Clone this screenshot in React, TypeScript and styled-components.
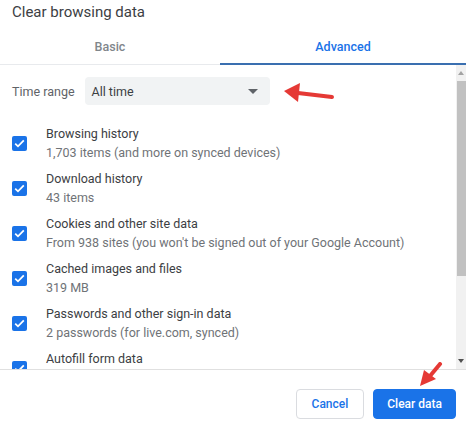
import styled, { createGlobalStyle } from "styled-components";

const GlobalStyle = createGlobalStyle`
  html, body {
    margin: 0;
    padding: 0;
    background: #fff;
  }
  body {
    font-family: Roboto, "Liberation Sans", Arial, sans-serif;
    color: #202124;
  }
`;

const Dialog = styled.div`
  position: relative;
  width: 474px;
  height: 427px;
  display: flex;
  flex-direction: column;
  overflow: hidden;
  background: #fff;
`;

const Title = styled.div`
  height: 25px;
  padding: 2px 0 0 12px;
  font-size: 15px;
  line-height: 20px;
  color: #3c4043;
`;

const Tabs = styled.div`
  display: flex;
  width: 466px;
  height: 37px;
  border-bottom: 1px solid #e8eaed;
`;

const Tab = styled.div<{ $active?: boolean }>`
  flex: ${(p) => (p.$active ? "0 0 246px" : "0 0 220px")};
  display: flex;
  align-items: center;
  justify-content: center;
  padding-top: 2px;
  font-size: 12.5px;
  font-weight: 500;
  color: ${(p) => (p.$active ? "#1a73e8" : "#80868b")};
  border-bottom: 2px solid ${(p) => (p.$active ? "#3a6fb0" : "transparent")};
  margin-bottom: -1px;
  box-sizing: border-box;
`;

const BodyRow = styled.div`
  display: flex;
  height: 304px;
  border-bottom: 1px solid #e0e0e0;
  width: 466px;
`;

const Content = styled.div`
  flex: 1;
  padding: 12px 0 0 12px;
  overflow: hidden;
`;

const RangeRow = styled.div`
  display: flex;
  align-items: center;
  gap: 10px;
  margin-bottom: 19px;
`;

const Label = styled.span`
  font-size: 12.5px;
  color: #5f6368;
  white-space: nowrap;
`;

const Select = styled.div`
  width: 185px;
  height: 28px;
  box-sizing: border-box;
  padding: 0 12px 0 7px;
  display: flex;
  align-items: center;
  justify-content: space-between;
  background: #f1f3f4;
  border-radius: 4px;
  font-size: 12.5px;
  color: #3c4043;
`;

const Caret = styled.span`
  width: 0;
  height: 0;
  border-left: 5px solid transparent;
  border-right: 5px solid transparent;
  border-top: 5px solid #5f6368;
`;

const Item = styled.div`
  display: flex;
  align-items: center;
  height: 38px;
  margin-bottom: 7px;
`;

const Check = styled.span`
  width: 15px;
  height: 15px;
  border-radius: 2px;
  background: #1a73e8;
  display: flex;
  align-items: center;
  justify-content: center;
  margin-right: 19px;
  flex-shrink: 0;
`;

const Texts = styled.div`
  display: flex;
  flex-direction: column;
`;

const ItemTitle = styled.span`
  font-size: 12.5px;
  line-height: 19px;
  color: #3c4043;
`;

const ItemSub = styled.span`
  font-size: 12.5px;
  line-height: 19px;
  min-height: 19px;
  color: #6f7377;
`;

const ScrollTrack = styled.div`
  width: 10px;
  background: #f1f1f1;
  display: flex;
  flex-direction: column;
  align-items: center;
`;

const ScrollArrow = styled.div<{ $down?: boolean }>`
  height: 16px;
  display: flex;
  align-items: center;
  justify-content: center;
  &::after {
    content: "";
    border-left: 3px solid transparent;
    border-right: 3px solid transparent;
    ${(p) =>
      p.$down
        ? "border-top: 4px solid #505050;"
        : "border-bottom: 4px solid #a3a3a3;"}
  }
`;

const Thumb = styled.div`
  width: 9px;
  height: 195px;
  background: #c1c1c1;
`;

const Spacer = styled.div`
  flex: 1;
`;

const Footer = styled.div`
  flex: 1;
  display: flex;
  justify-content: flex-end;
  align-items: flex-start;
  gap: 9px;
  padding: 19px 18px 0 0;
`;

const Button = styled.button<{ $primary?: boolean }>`
  height: 30px;
  padding: 0 ${(p) => (p.$primary ? "13px" : "15px")};
  border-radius: 4px;
  font-family: inherit;
  font-size: 12px;
  font-weight: 500;
  border: 1px solid ${(p) => (p.$primary ? "#1a73e8" : "#dadce0")};
  background: ${(p) => (p.$primary ? "#1a73e8" : "#fff")};
  color: ${(p) => (p.$primary ? "#fff" : "#1a73e8")};
`;

const Arrow = styled.svg`
  position: absolute;
  pointer-events: none;
`;

const items = [
  ["Browsing history", "1,703 items (and more on synced devices)"],
  ["Download history", "43 items"],
  ["Cookies and other site data", "From 938 sites (you won't be signed out of your Google Account)"],
  ["Cached images and files", "319 MB"],
  ["Passwords and other sign-in data", "2 passwords (for live.com, synced)"],
  ["Autofill form data", ""],
];

export default function App() {
  return (
    <>
      <GlobalStyle />
      <Dialog>
        <Title>Clear browsing data</Title>
        <Tabs>
          <Tab>Basic</Tab>
          <Tab $active>Advanced</Tab>
        </Tabs>
        <BodyRow>
          <Content>
            <RangeRow>
              <Label>Time range</Label>
              <Select>
                All time
                <Caret />
              </Select>
            </RangeRow>
            {items.map(([t, s]) => (
              <Item key={t}>
                <Check>
                  <svg width="11" height="9" viewBox="0 0 11 9">
                    <path d="M1.2 4.6 L4 7.3 L9.8 1.4" stroke="#fff" strokeWidth="1.8" fill="none" />
                  </svg>
                </Check>
                <Texts>
                  <ItemTitle>{t}</ItemTitle>
                  <ItemSub>{s}</ItemSub>
                </Texts>
              </Item>
            ))}
          </Content>
          <ScrollTrack>
            <ScrollArrow />
            <Thumb />
            <Spacer />
            <ScrollArrow $down />
          </ScrollTrack>
        </BodyRow>
        <Footer>
          <Button>Cancel</Button>
          <Button $primary>Clear data</Button>
        </Footer>
        <Arrow style={{ left: 280, top: 80 }} width="60" height="26" viewBox="0 0 60 26">
          <path d="M52 17 L18 13" stroke="#e53935" strokeWidth="4" strokeLinecap="round" fill="none" />
          <path d="M4 11 L20 3 L18 22 Z" fill="#e53935" />
        </Arrow>
        <Arrow style={{ left: 412, top: 362 }} width="34" height="26" viewBox="0 0 34 26">
          <path d="M28 2 L18 14" stroke="#e53935" strokeWidth="4" strokeLinecap="round" fill="none" />
          <path d="M8 24 L12 8 L24 17 Z" fill="#e53935" />
        </Arrow>
      </Dialog>
    </>
  );
}
